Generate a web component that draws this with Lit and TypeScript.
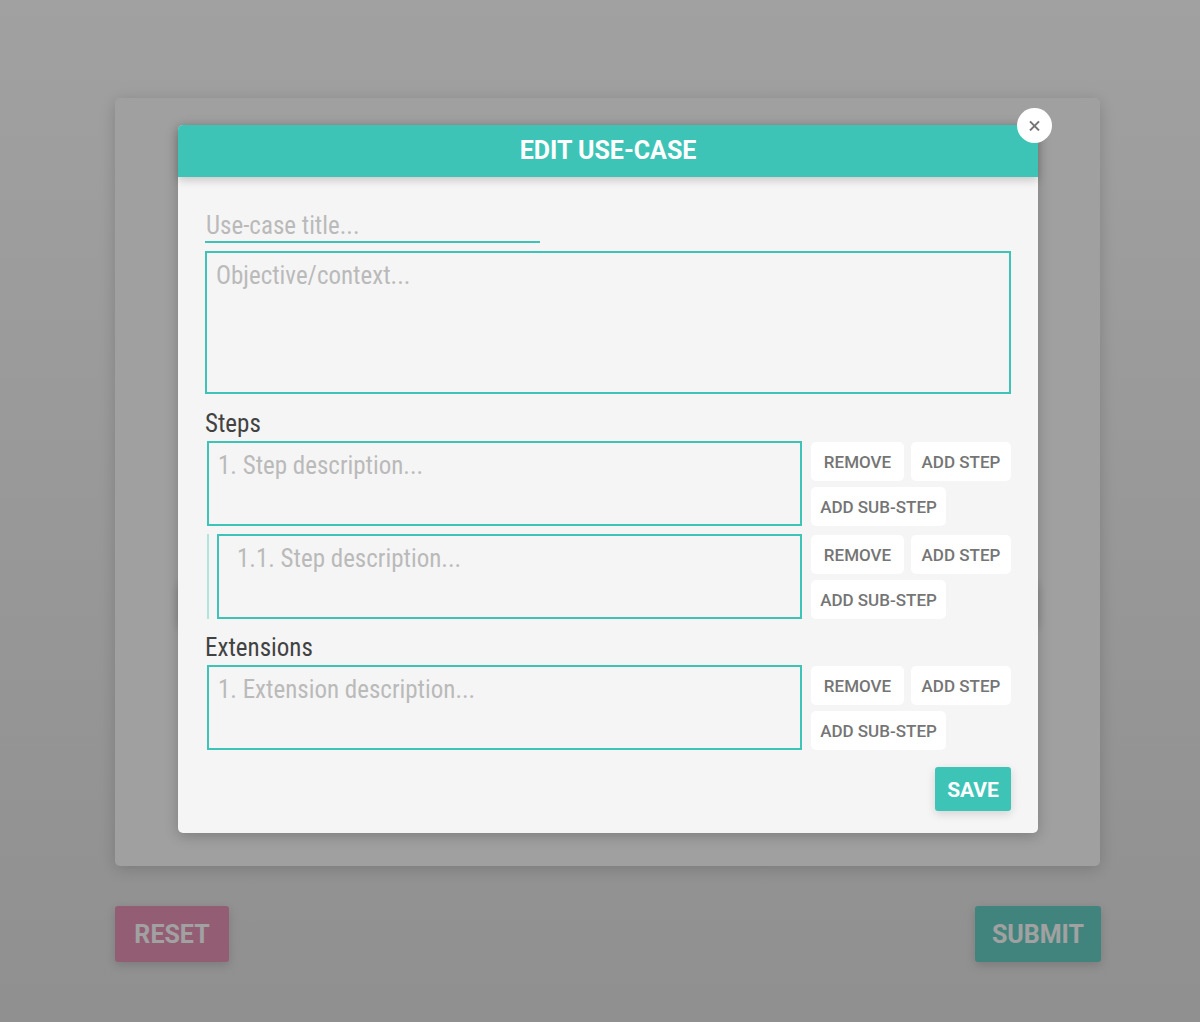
import { LitElement, html, css } from "lit";
import { customElement, state } from "lit/decorators.js";

interface Entry {
  id: string;
  hint: string;
  nested: boolean;
}

@customElement("use-case-entry")
export class UseCaseEntry extends LitElement {
  static properties = { hint: {}, nested: { type: Boolean } };
  declare hint: string;
  declare nested: boolean;

  static styles = css`
    :host {
      display: block;
    }
    .row {
      display: flex;
      align-items: stretch;
      padding-left: 2px;
      gap: 9px;
    }
    .field {
      flex: 1;
      min-width: 0;
      display: flex;
    }
    .nested {
      border-left: 2px solid #b2e4dd;
      padding-left: 8px;
    }
    textarea {
      box-sizing: border-box;
      flex: 1;
      min-width: 0;
      height: 85px;
      margin: 0;
      padding: 8px 9px;
      border: 2px solid #3ec4b6;
      border-radius: 0;
      background: transparent;
      resize: none;
      outline: none;
      color: #424242;
      font: 400 25px/30px "Roboto Condensed", Roboto, sans-serif;
    }
    .nested textarea {
      padding-left: 18px;
    }
    textarea::placeholder {
      color: #bababa;
      opacity: 1;
    }
    .actions {
      display: flex;
      flex-wrap: wrap;
      align-content: flex-start;
      gap: 6px 7px;
      width: 200px;
      padding-top: 1px;
    }
    button {
      height: 39px;
      padding: 2px 0 0;
      border: 0;
      border-radius: 5px;
      background: #fff;
      color: #757575;
      font: 500 17px/37px Roboto, sans-serif;
      white-space: nowrap;
      cursor: pointer;
    }
    .remove {
      width: 93px;
    }
    .add {
      width: 100px;
    }
    .sub {
      width: 135px;
    }
  `;

  render() {
    return html`<div class="row">
      <div class="field ${this.nested ? "nested" : ""}">
        <textarea aria-label=${this.hint} placeholder=${this.hint}></textarea>
      </div>
      <div class="actions">
        <button class="remove" type="button">REMOVE</button>
        <button class="add" type="button">ADD STEP</button>
        <button class="sub" type="button">ADD SUB-STEP</button>
      </div>
    </div>`;
  }
}

@customElement("app-root")
export class AppRoot extends LitElement {
  @state() private steps: Entry[] = [
    { id: "s1", hint: "1. Step description...", nested: false },
    { id: "s11", hint: "1.1. Step description...", nested: true },
  ];
  @state() private extensions: Entry[] = [
    { id: "e1", hint: "1. Extension description...", nested: false },
  ];

  static styles = css`
    :host {
      display: block;
      position: relative;
      font-family: Roboto, sans-serif;
    }
    .page {
      box-sizing: border-box;
      min-height: 100vh;
      display: flex;
      flex-direction: column;
      gap: 40px;
      padding: 98px 100px 60px 115px;
      background: linear-gradient(#fefefe, #dcdcdc);
    }
    .panel {
      flex: 1;
      display: flex;
      flex-direction: column;
      justify-content: flex-end;
      padding: 0 62px 240px 63px;
      border-radius: 5px;
      background: #fdfdfd;
      box-shadow: 0 3px 16px rgba(0, 0, 0, 0.22);
    }
    .card {
      height: 46px;
      border-radius: 5px;
      background: #fdfdfd;
      box-shadow: 0 3px 10px rgba(0, 0, 0, 0.22);
    }
    .footer {
      display: flex;
      justify-content: space-between;
      margin-right: -1px;
    }
    .big {
      height: 56px;
      padding: 2px 0 0;
      border: 0;
      border-radius: 3px;
      color: #fff;
      font: 700 25px/54px Roboto, sans-serif;
      box-shadow: 0 3px 10px rgba(0, 0, 0, 0.2);
      cursor: pointer;
    }
    .reset {
      width: 114px;
      background: #e276a2;
    }
    .submit {
      width: 126px;
      background: #3ec4b6;
    }
    .overlay {
      box-sizing: border-box;
      position: absolute;
      inset: 0;
      padding: 125px 162px 0 178px;
      background: rgba(68, 68, 68, 0.5);
    }
    .dialog {
      position: relative;
      border-radius: 5px;
      background: #f5f5f5;
      box-shadow: 0 3px 14px rgba(0, 0, 0, 0.22);
    }
    .title {
      margin: 0;
      border-radius: 5px 5px 0 0;
      background: #3ec4b6;
      color: #fff;
      font: 700 25px/52px Roboto, sans-serif;
      text-align: center;
      box-shadow: 0 3px 10px rgba(0, 0, 0, 0.2);
    }
    .close {
      position: absolute;
      top: -17px;
      right: -14px;
      display: grid;
      place-items: center;
      width: 35px;
      height: 35px;
      padding: 0;
      border: 0;
      border-radius: 50%;
      background: #fff;
      cursor: pointer;
    }
    .form {
      display: flex;
      flex-direction: column;
      padding: 30px 27px 22px;
    }
    .name,
    .context {
      box-sizing: border-box;
      margin: 0;
      border: 2px solid #3ec4b6;
      border-radius: 0;
      background: transparent;
      outline: none;
      resize: none;
      color: #424242;
      font: 400 25px/30px "Roboto Condensed", Roboto, sans-serif;
    }
    .name {
      width: 335px;
      max-width: 100%;
      height: 36px;
      padding: 2px 1px 0;
      border-width: 0 0 2px;
    }
    .context {
      width: 100%;
      height: 143px;
      margin-top: 8px;
      padding: 8px 9px;
    }
    .name::placeholder,
    .context::placeholder {
      color: #bababa;
      opacity: 1;
    }
    .heading {
      margin: 0;
      padding: 15px 0 2px;
      color: #424242;
      font: 400 25px/30px "Roboto Condensed", Roboto, sans-serif;
    }
    .list + .heading {
      padding-top: 14px;
    }
    .list {
      display: flex;
      flex-direction: column;
      gap: 8px;
    }
    .save {
      align-self: flex-end;
      width: 76px;
      height: 44px;
      margin-top: 17px;
      padding: 2px 0 0;
      border: 0;
      border-radius: 3px;
      background: #3ec4b6;
      color: #fff;
      font: 700 21px/42px Roboto, sans-serif;
      box-shadow: 0 3px 10px rgba(0, 0, 0, 0.14);
      cursor: pointer;
    }
  `;

  private renderEntries(entries: Entry[]) {
    return html`<div class="list">
      ${entries.map(
        (e) => html`<use-case-entry .hint=${e.hint} .nested=${e.nested}></use-case-entry>`
      )}
    </div>`;
  }

  render() {
    return html`
      <main class="page">
        <section class="panel"><div class="card"></div></section>
        <footer class="footer">
          <button class="big reset" type="button">RESET</button>
          <button class="big submit" type="button">SUBMIT</button>
        </footer>
      </main>
      <div class="overlay">
        <div class="dialog" role="dialog" aria-labelledby="dialog-title">
          <h1 class="title" id="dialog-title">EDIT USE-CASE</h1>
          <button class="close" type="button" aria-label="Close">
            <svg width="11" height="11" viewBox="0 0 11 11" aria-hidden="true">
              <path d="M1 1.4 10 10.4M10 1.4 1 10.4" fill="none" stroke="#757575" stroke-width="2" />
            </svg>
          </button>
          <form class="form">
            <input class="name" type="text" aria-label="Use-case title" placeholder="Use-case title..." />
            <textarea class="context" aria-label="Objective/context" placeholder="Objective/context..."></textarea>
            <h2 class="heading">Steps</h2>
            ${this.renderEntries(this.steps)}
            <h2 class="heading">Extensions</h2>
            ${this.renderEntries(this.extensions)}
            <button class="save" type="button">SAVE</button>
          </form>
        </div>
      </div>
    `;
  }
}
